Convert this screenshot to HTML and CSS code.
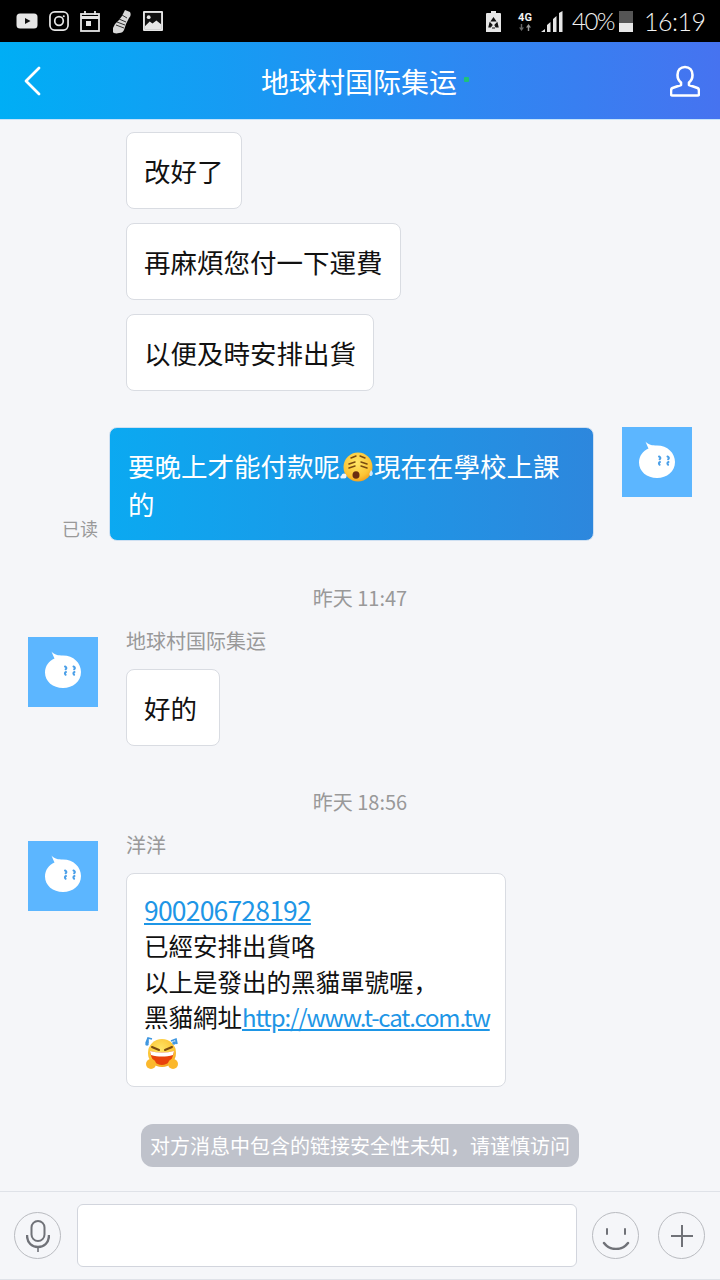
FILE: index.html
```html
<!DOCTYPE html>
<html lang="zh">
<head>
<meta charset="utf-8">
<title>地球村国际集运</title>
<link rel="stylesheet" href="styles.css">
</head>
<body>
<svg class="defs" width="0" height="0" aria-hidden="true">
  <defs>
    <symbol id="logo" viewBox="0 0 70 70">
      <rect width="70" height="70" fill="#5cb6ff"/>
      <path d="M23.500 14.500C26.500 18 30 18.500 35 18.500C45.500 18.500 53 26 53 35C53 44.500 45 51 35 51C25 51 17 44.500 17 35.500C17 29 21 24 26.500 21.500C25.500 19.500 24.500 17 23.500 14.500Z" fill="#fff"/>
      <path d="M37 29.500c1.700 .8 1.800 2 .6 2.800M38 35c-1.300 .4-1.500 1.800-.4 2.800M45.500 29.500c1.700 .8 1.800 2 .6 2.800M46.500 35c-1.300 .4-1.500 1.800-.4 2.800" fill="none" stroke="#4a9fe8" stroke-width="2" stroke-linecap="round"/>
    </symbol>
    <radialGradient id="face" cx="0.450" cy="0.350" r="0.700">
      <stop offset="0" stop-color="#ffe566"/>
      <stop offset="0.700" stop-color="#fcc434"/>
      <stop offset="1" stop-color="#f09a1c"/>
    </radialGradient>
  </defs>
</svg>

<div class="page">
  <div class="statusbar">
    <div class="status-left">
      <svg class="si" width="22" height="16" viewBox="0 0 22 16"><rect x="0.500" y="0.500" width="21" height="15" rx="3.500" fill="#e6e6e6"/><path d="M9 5l5.500 3L9 11z" fill="#111"/></svg>
      <svg class="si" width="20" height="20" viewBox="0 0 21 21" fill="none" stroke="#e6e6e6"><rect x="1" y="1" width="19" height="19" rx="5" stroke-width="1.800"/><circle cx="10.500" cy="10.500" r="4.500" stroke-width="1.800"/><circle cx="15.500" cy="5.500" r="1.100" fill="#e6e6e6" stroke="none"/></svg>
      <svg class="si" width="20" height="21" viewBox="0 0 20 21" fill="none" stroke="#e6e6e6"><rect x="1" y="3" width="18" height="17" stroke-width="1.800"/><path d="M1 6.500h18" stroke-width="3"/><path d="M5 0v4M15 0v4" stroke-width="1.800"/><rect x="6" y="10" width="5" height="5" fill="#e6e6e6" stroke="none"/></svg>
      <svg class="si" width="21" height="25" viewBox="0 0 21 25"><path d="M14 1l5 2c1 2 1 4-1 6l-3 6-2 6c-1 2-2 3-5 3-3 1-6 0-6-1l0-4 2-4 4-4 3-4 2-4z" fill="#d8d8d8"/><path d="M8 10l7 3M6 13l8 3M5 16l8 3M11 6l5 3" stroke="#333" stroke-width="1"/></svg>
      <svg class="si" width="20" height="20" viewBox="0 0 21 21"><rect width="21" height="21" rx="1" fill="#e6e6e6"/><rect x="2" y="2" width="17" height="17" fill="#111"/><circle cx="6" cy="6.500" r="2" fill="#e6e6e6"/><path d="M2 16l5-5 3 2 4-3 5 4v5H2z" fill="#e6e6e6"/></svg>
    </div>
    <div class="status-right">
      <svg class="si saver" width="15" height="21" viewBox="0 0 15 21"><path d="M5 0h5v2h4a1 1 0 0 1 1 1v18H0V3a1 1 0 0 1 1-1h4z" fill="#e6e6e6"/><path d="M7.500 7l2 3H5.500zM4 12l2 2-1.500 2H3zM11 12l1 4h-2l-1-2zM6 17h3" stroke="#111" stroke-width="1.200" fill="#111"/></svg>
      <span class="net"><span class="net-label">4G</span><svg width="14" height="7" viewBox="0 0 14 7"><path d="M3.500 7L1 3.500h1.800V0h1.400v3.500H6z" fill="#666"/><path d="M10.500 0L8 3.500h1.800V7h1.400V3.500H13z" fill="#999"/></svg></span>
      <svg class="si signal" width="22" height="21" viewBox="0 0 22 21"><path d="M0 21l4-3v3zM6 21V14l3.500-3v10zM12 21V8l3.500-3v16zM18 21V2l3.500-2v21z" fill="#e6e6e6"/></svg>
      <span class="pct">40%</span>
      <span class="battery"><span class="battery-level"></span></span>
      <span class="clock">16:19</span>
    </div>
  </div>

  <header class="topbar">
    <svg class="back" width="20" height="32" viewBox="0 0 20 32"><path d="M17 3L4 16l13 13" fill="none" stroke="#fff" stroke-width="2.800" stroke-linecap="round" stroke-linejoin="round"/></svg>
    <div class="title-wrap"><h1 class="title">地球村国际集运</h1><span class="online"></span></div>
    <svg class="person" width="30" height="32" viewBox="0 0 30 32"><path d="M15 2c4.500 0 7.500 3.300 7.500 8 0 3.500-1.600 6-3.500 7.500v2.500l8.500 3c1.200 .5 1.500 1.500 1.500 3v3c0 1-.5 1.500-1.500 1.500h-25C1.500 30.500 1 30 1 29v-3c0-1.500 .3-2.500 1.500-3l8.500-3v-2.500C9.100 16 7.500 13.500 7.500 10c0-4.700 3-8 7.500-8z" fill="none" stroke="#fff" stroke-width="2.600" stroke-linejoin="round"/></svg>
  </header>

  <main class="chat">
    <div class="row-in first"><div class="bubble">改好了</div></div>
    <div class="row-in tight"><div class="bubble">再麻煩您付一下運費</div></div>
    <div class="row-in tight"><div class="bubble">以便及時安排出貨</div></div>

    <div class="row-out">
      <span class="read">已读</span>
      <div class="bubble-out">要晚上才能付款呢<svg class="emoji" width="34" height="34" viewBox="0 0 34 34"><circle cx="18" cy="16" r="14.500" fill="url(#face)"/><path d="M11 7l5-2M25 7l-5-2" stroke="#7a4a10" stroke-width="1.400" stroke-linecap="round"/><path d="M9 13l6-2M9 17l6-2M27 13l-6-2M27 17l-6-2" stroke="#7a4a10" stroke-width="1.500" stroke-linecap="round"/><ellipse cx="16" cy="24" rx="3.500" ry="3.800" fill="#6b2c10"/><circle cx="4" cy="25" r="2.500" fill="#eef4fb"/><circle cx="1.800" cy="26" r="1.500" fill="#eef4fb"/><path d="M31 19c2 2 2.500 4 1 5.500s-3 0-2.500-2z" fill="#cfe8fa"/></svg>現在在學校上課<br>的</div>
      <svg class="avatar" width="70" height="70"><use href="#logo"/></svg>
    </div>

    <div class="time">昨天 11:47</div>
    <div class="row-from">
      <svg class="avatar from" width="70" height="70"><use href="#logo"/></svg>
      <div class="from-body">
        <div class="name">地球村国际集运</div>
        <div class="bubble">好的</div>
      </div>
    </div>

    <div class="time">昨天 18:56</div>
    <div class="row-from">
      <svg class="avatar from" width="70" height="70"><use href="#logo"/></svg>
      <div class="from-body">
        <div class="name">洋洋</div>
        <div class="bubble long">
          <a class="link digits">900206728192</a><br>已經安排出貨咯<br>以上是發出的黑貓單號喔，<br>黑貓網址<a class="link url">http://www.t-cat.com.tw</a><br><svg class="emoji big" width="36" height="36" viewBox="0 0 36 36"><circle cx="18" cy="18" r="14" fill="url(#face)"/><path d="M8 12l7 3M28 12l-7 3" stroke="#7a4a10" stroke-width="2" stroke-linecap="round"/><path d="M6 16c8 2 16 2 24 0-1 9-6 14-12 14S7 25 6 16z" fill="#e8420c"/><path d="M6 16c8 2 16 2 24 0l-1 4c-7 2-15 2-22 0z" fill="#fff"/><circle cx="7" cy="29" r="5" fill="#fbb82c"/><circle cx="29" cy="29" r="5" fill="#fbb82c"/><path d="M2 8l2-5 4 1M4 3v5M27 6l5-2 1 5M32 4v5" fill="none" stroke="#3f97e0" stroke-width="1.600"/><circle cx="3" cy="9" r="1.800" fill="#3f97e0"/><circle cx="30" cy="8" r="1.800" fill="#3f97e0"/></svg>
        </div>
      </div>
    </div>

    <div class="notice-wrap"><div class="notice">对方消息中包含的链接安全性未知，请谨慎访问</div></div>
  </main>

  <footer class="composer">
    <button class="round">
      <svg width="24" height="32" viewBox="0 0 24 32" fill="none" stroke="#707278"><rect x="5.500" y="1" width="13" height="20" rx="6.500" stroke-width="2"/><path d="M1 15c0 8 5 12 11 12s11-4 11-12" stroke-width="2.400"/><path d="M12 27v5" stroke-width="1.600"/></svg>
    </button>
    <div class="input"></div>
    <button class="round">
      <svg width="28" height="28" viewBox="0 0 28 28" fill="none" stroke="#707278"><path d="M5 7v5M23 7v5" stroke-width="2" stroke-linecap="round"/><path d="M2 21c3 4 7 6 12 6s9-2 12-6" stroke-width="2.400" stroke-linecap="round"/></svg>
    </button>
    <button class="round">
      <svg width="24" height="24" viewBox="0 0 24 24" fill="none" stroke="#707278" stroke-width="2"><path d="M12 1v22M1 12h22"/></svg>
    </button>
  </footer>
</div>
</body>
</html>
```
FILE: styles.css
```css
* { box-sizing: border-box; }
html, body { margin: 0; padding: 0; }
body {
  width: 720px;
  height: 1280px;
  overflow: hidden;
  background: #f5f6f9;
  font-family: "Noto Sans CJK TC", "Noto Sans", sans-serif;
  color: #111;
}
.defs { position: absolute; }
.page { display: flex; flex-direction: column; height: 1280px; }

.statusbar {
  flex: none;
  height: 42px;
  background: #000;
  color: #f2f2f2;
  display: flex;
  align-items: center;
  justify-content: space-between;
  padding: 0 18px 0 16px;
}
.status-left, .status-right { display: flex; align-items: center; }
.status-left { gap: 11px; }
.si { display: block; flex: none; }
.saver { margin-right: 15px; }
.net { display: flex; flex-direction: column; align-items: center; width: 18px; margin-right: 7px; }
.net-label { font: 700 11px/12px "Roboto", sans-serif; }
.signal { margin-right: 9px; }
.pct { font: 300 24px/30px "Lato", sans-serif; width: 47px; letter-spacing: -1.500px; }
.battery { width: 14px; height: 21px; background: #555; display: flex; align-items: flex-end; margin-right: 11px; }
.battery-level { display: block; width: 100%; height: 9px; background: #e6e6e6; }
.clock { font: 300 25px/30px "Lato", sans-serif; width: 58px; letter-spacing: -0.500px; }

.topbar {
  flex: none;
  height: 78px;
  background: linear-gradient(90deg, #00aef5, #4673f0);
  border-bottom: 1px solid #c5e3fb;
  display: flex;
  align-items: center;
  justify-content: space-between;
  padding: 0 20px 0 22px;
}
.title-wrap { display: flex; align-items: center; margin-left: 6px; }
.title { margin: 0; font-size: 28px; font-weight: 400; line-height: 40px; color: #fff; }
.online { width: 5px; height: 5px; margin: 0 -12px 2px 7px; border-radius: 1px; background: #1fc27a; }

.chat { flex: 1; min-height: 0; display: flex; flex-direction: column; padding: 0 28px; }

.bubble {
  align-self: flex-start;
  min-width: 94px;
  background: #fff;
  border: 1px solid #d9dce2;
  border-radius: 8px;
  padding: 17px 17px;
  font-size: 26.500px;
  line-height: 41px;
  white-space: nowrap;
}
.row-in { display: flex; padding-left: 98px; margin-top: 14px; }
.row-in.first { margin-top: 12px; }

.row-out { display: flex; justify-content: flex-end; align-items: flex-start; margin-top: 36px; margin-bottom: 1px; gap: 28px; position: relative; }
.read { position: absolute; left: 34px; top: 88px; font-size: 18px; line-height: 26px; color: #999; }
.bubble-out {
  width: 485px;
  height: 114px;
  padding: 19px 18px 0;
  border: 1px solid #cfe0f2;
  border-radius: 8px;
  background: linear-gradient(90deg, #0ba9f1, #2d87dd);
  color: #fff;
  font-size: 26.500px;
  line-height: 37px;
}
.emoji { vertical-align: -8px; }
.avatar { flex: none; display: block; }

.time { margin-top: 42px; height: 28px; font-size: 20px; line-height: 28px; color: #999; text-align: center; }
.row-from { display: flex; gap: 28px; margin-top: 17px; }
.avatar.from { margin-top: 8px; }
.from-body { display: flex; flex-direction: column; min-width: 0; }
.name { height: 24px; margin-bottom: 16px; font-size: 20px; line-height: 24px; color: #999; }

.bubble.long { width: 380px; height: 214px; padding: 18px 17px 0; font-size: 24.500px; line-height: 35.300px; }
.link { color: #1e96e6; text-decoration: underline; }
.digits { font-size: 26.500px; letter-spacing: -0.800px; }
.url { font-size: 24px; letter-spacing: -1.150px; }
.emoji.big { vertical-align: -9px; }

.notice-wrap { display: flex; justify-content: center; margin-top: 37px; }
.notice {
  height: 43px;
  padding: 0 9px;
  border-radius: 12px;
  background: #bfc2cb;
  color: #fff;
  font-size: 20px;
  line-height: 43px;
}

.composer {
  flex: none;
  height: 89px;
  border-top: 1px solid #dfe2e8;
  border-bottom: 1px solid #dfe2e8;
  display: flex;
  align-items: center;
  padding: 0 15px 0 14px;
}
.round {
  flex: none;
  width: 47px;
  height: 47px;
  padding: 0;
  border: 1.500px solid #b9bbc0;
  border-radius: 50%;
  background: #f5f6f9;
  display: flex;
  align-items: center;
  justify-content: center;
}
.input {
  flex: none;
  width: 500px;
  height: 63px;
  margin: 0 15px 0 16px;
  background: #fff;
  border: 1px solid #d2d5dd;
  border-radius: 6px;
}
.round:last-child { margin-left: 19px; }
```
